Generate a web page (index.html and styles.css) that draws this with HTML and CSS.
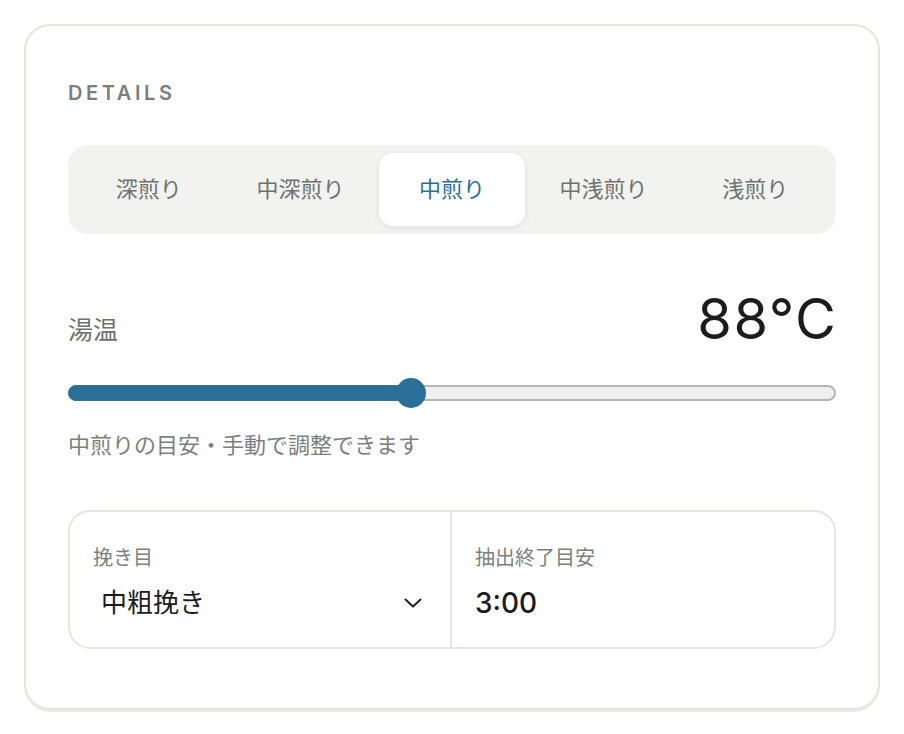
FILE: index.html
```html
<!DOCTYPE html>
<html lang="ja">
<head>
    <meta charset="UTF-8">
    <meta name="viewport" content="width=device-width, initial-scale=1.0">
    <title>抽出の詳細</title>
    <link rel="stylesheet" href="styles.css">
</head>
<body>
    <!-- Details card -->
    <div class="card">
        <h3 class="eyebrow">DETAILS</h3>

        <!-- Roast level -->
        <div class="roast-tabs">
            <button class="tab">深煎り</button>
            <button class="tab">中深煎り</button>
            <button class="tab active">中煎り</button>
            <button class="tab">中浅煎り</button>
            <button class="tab">浅煎り</button>
        </div>

        <!-- Water temperature -->
        <div class="temp-row">
            <span class="temp-label">湯温</span>
            <span class="temp-value">88°C</span>
        </div>
        <div class="slider">
            <div class="track">
                <div class="fill" style="width: 44.6%"></div>
            </div>
            <div class="thumb" style="left: 44.6%"></div>
        </div>
        <p class="hint">中煎りの目安・手動で調整できます</p>

        <!-- Grind and time -->
        <div class="info-grid">
            <div class="cell">
                <div class="cell-label">挽き目</div>
                <div class="select">
                    <span>中粗挽き</span>
                    <svg width="18" height="10" viewBox="0 0 18 10"><polyline points="1.5,1.5 9,8.5 16.5,1.5" fill="none" stroke="#222" stroke-width="2" stroke-linecap="round" stroke-linejoin="round"/></svg>
                </div>
            </div>
            <div class="cell">
                <div class="cell-label">抽出終了目安</div>
                <div class="cell-value">3:00</div>
            </div>
        </div>
    </div>
</body>
</html>
```

FILE: styles.css
```css
/* General */
body {
    margin: 0;
    background-color: #fff;
    font-family: Inter, "Noto Sans CJK JP", sans-serif;
    color: #1b1c1b;
}

/* Card */
.card {
    width: 856px;
    height: 686px;
    box-sizing: border-box;
    margin: 24px;
    padding: 0 42px;
    border: 2px solid #e5e5e0;
    border-radius: 26px;
    box-shadow: 0 2px 0 #ecece8;
}
.eyebrow {
    margin: 0;
    padding-top: 55px;
    font-size: 20px;
    line-height: 24px;
    font-weight: 600;
    letter-spacing: 3.6px;
    color: #7a807c;
}

/* Roast tabs */
.roast-tabs {
    display: flex;
    gap: 6px;
    margin-top: 40px;
    padding: 8px;
    background-color: #f2f2f0;
    border-radius: 20px;
}
.tab {
    flex: 1;
    height: 73px;
    padding: 0 0 5px;
    border: none;
    border-radius: 14px;
    background: none;
    font-family: inherit;
    font-size: 22px;
    color: #6d726e;
    cursor: pointer;
}
.tab.active {
    background-color: #fff;
    color: #2a6f97;
    box-shadow: 0 2px 6px rgba(0, 0, 0, 0.08);
}

/* Temperature */
.temp-row {
    display: flex;
    justify-content: space-between;
    align-items: baseline;
    margin-top: 56px;
}
.temp-label {
    font-size: 25px;
    color: #6d726e;
}
.temp-value {
    margin-right: -1.5px;
    font-size: 56px;
    line-height: 58px;
    letter-spacing: 1.5px;
    color: #1b1c1b;
}
.slider {
    position: relative;
    height: 30px;
    margin-top: 30px;
}
.track {
    position: relative;
    top: 7px;
    height: 16px;
    box-sizing: border-box;
    border: 2px solid #b5b5b5;
    border-radius: 8px;
    background-color: #efefef;
}
.fill {
    position: absolute;
    top: -2px;
    bottom: -2px;
    left: -2px;
    background-color: #2a6f97;
    border: 1px solid #456f88;
    border-radius: 8px 0 0 8px;
}
.thumb {
    position: absolute;
    top: 0;
    width: 30px;
    height: 30px;
    margin-left: -15px;
    border-radius: 50%;
    background-color: #2a6f97;
}
.hint {
    margin: 22px 0 0;
    font-size: 22px;
    line-height: 30px;
    color: #7a807c;
}

/* Grind / time grid */
.info-grid {
    display: grid;
    grid-template-columns: 380px 1fr;
    margin-top: 50px;
    height: 139px;
    box-sizing: border-box;
    border: 2px solid #e5e5e0;
    border-radius: 22px;
}
.cell {
    padding: 33px 23px 0;
}
.cell + .cell {
    border-left: 2px solid #e5e5e0;
}
.cell-label {
    font-size: 20px;
    line-height: 26px;
    color: #7a807c;
}
.select {
    display: flex;
    justify-content: space-between;
    align-items: center;
    margin-top: 16px;
    padding: 0 5px 0 8px;
    font-size: 26px;
    line-height: 32px;
}
.cell-value {
    margin-top: 16px;
    font-size: 28px;
    line-height: 32px;
    font-weight: 500;
}
```
